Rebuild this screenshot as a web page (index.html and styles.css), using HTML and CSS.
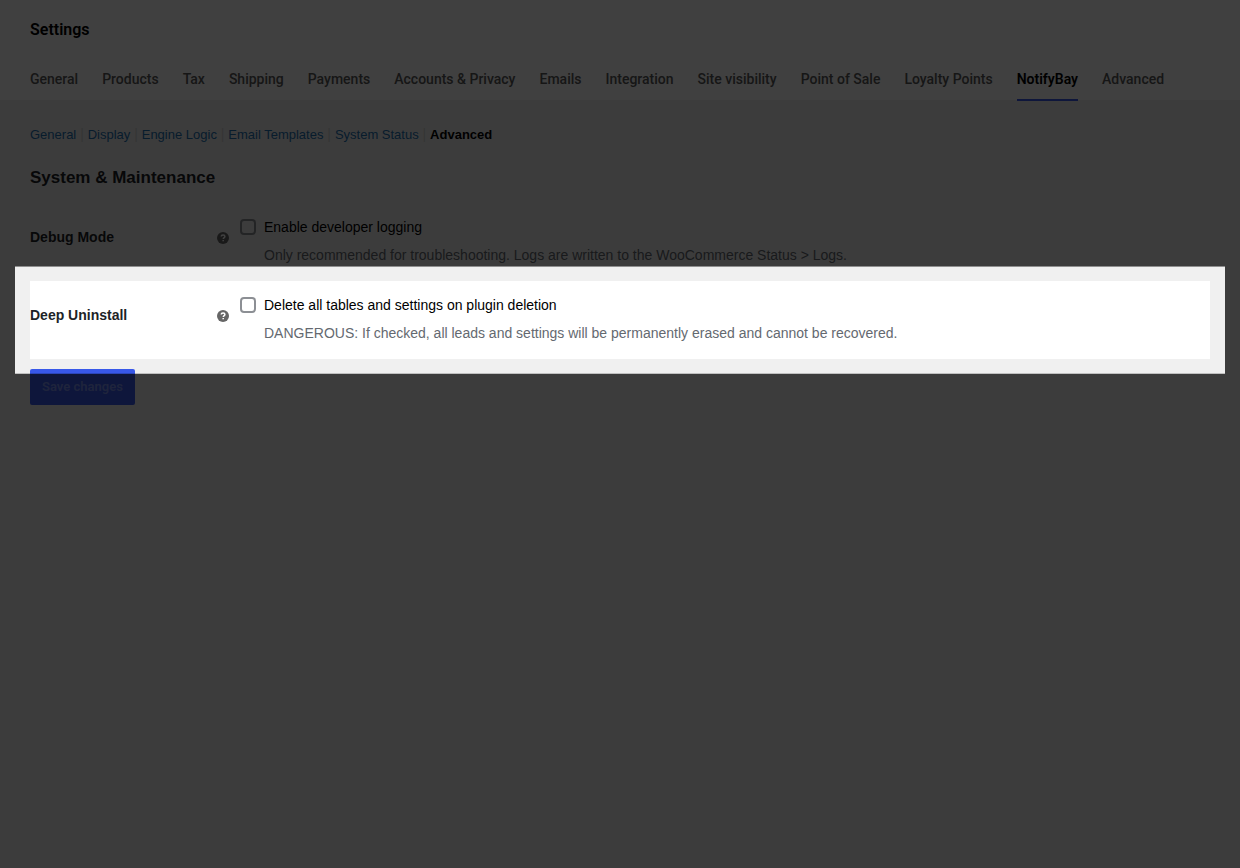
FILE: index.html
```html
<!DOCTYPE html>
<html lang="en">
  <head>
    <meta charset="UTF-8" />
    <meta name="viewport" content="width=device-width, initial-scale=1.0" />
    <title>WooCommerce Settings - NotifyBay</title>
    <link rel="stylesheet" href="styles.css">
  </head>
  <body>
    <header class="page-header">
      <h1>Settings</h1>
      <nav class="tabs">
        <a href="#">General</a>
        <a href="#">Products</a>
        <a href="#">Tax</a>
        <a href="#">Shipping</a>
        <a href="#">Payments</a>
        <a href="#">Accounts &amp; Privacy</a>
        <a href="#">Emails</a>
        <a href="#">Integration</a>
        <a href="#">Site visibility</a>
        <a href="#">Point of Sale</a>
        <a href="#">Loyalty Points</a>
        <a href="#" class="active">NotifyBay</a>
        <a href="#">Advanced</a>
      </nav>
    </header>

    <main class="content">
      <ul class="sections">
        <li><a href="#">General</a> |</li>
        <li><a href="#">Display</a> |</li>
        <li><a href="#">Engine Logic</a> |</li>
        <li><a href="#">Email Templates</a> |</li>
        <li><a href="#">System Status</a> |</li>
        <li><a href="#" class="current">Advanced</a></li>
      </ul>

      <h2>System &amp; Maintenance</h2>

      <form>
        <div class="setting">
          <div class="setting-title">
            <span>Debug Mode</span>
            <svg class="help" viewBox="0 0 12 12" aria-hidden="true">
              <circle cx="6" cy="6" r="6" />
              <path d="M4.3 4.6C4.3 3.5 5 2.9 6.1 2.9s1.8.6 1.8 1.5c0 1.2-1.6 1.2-1.6 2.5M6.2 7.9v1.4" />
            </svg>
          </div>
          <div class="setting-field">
            <label for="debug-mode">
              <input type="checkbox" id="debug-mode" />
              Enable developer logging
            </label>
            <p class="description">
              Only recommended for troubleshooting. Logs are written to the
              WooCommerce Status &gt; Logs.
            </p>
          </div>
        </div>

        <div class="setting highlighted">
          <div class="setting-title">
            <span>Deep Uninstall</span>
            <svg class="help" viewBox="0 0 12 12" aria-hidden="true">
              <circle cx="6" cy="6" r="6" />
              <path d="M4.3 4.6C4.3 3.5 5 2.9 6.1 2.9s1.8.6 1.8 1.5c0 1.2-1.6 1.2-1.6 2.5M6.2 7.9v1.4" />
            </svg>
          </div>
          <div class="setting-field">
            <label for="deep-uninstall">
              <input type="checkbox" id="deep-uninstall" />
              Delete all tables and settings on plugin deletion
            </label>
            <p class="description">
              DANGEROUS: If checked, all leads and settings will be permanently
              erased and cannot be recovered.
            </p>
          </div>
        </div>

        <button type="submit" class="save" disabled>Save changes</button>
      </form>
    </main>
  </body>
</html>
```
FILE: styles.css
```css
* {
  box-sizing: border-box;
}
body {
  min-height: 100vh;
  margin: 0;
  font-family: "Liberation Sans", Arial, sans-serif;
  font-size: 14px;
  line-height: 20px;
  color: #000;
  background-color: #f0f0f0;
  overflow-x: hidden;
}
a {
  color: #2271b1;
  text-decoration: none;
}

/* Header and tabs */
.page-header {
  padding: 20px 30px 0;
  background-color: #fff;
  font-family: Roboto, sans-serif;
}
h1 {
  margin: 0;
  font-size: 16px;
  font-weight: 600;
  line-height: 20px;
}
.tabs {
  display: flex;
  gap: 24px;
  height: 60px;
  white-space: nowrap;
}
.tabs a {
  height: 61px;
  padding-top: 29px;
  font-weight: 500;
  color: #5a5a5a;
}
.tabs a.active {
  color: #000;
  font-weight: 600;
  border-bottom: 2px solid #3858e9;
}

/* Section links */
.content {
  padding: 24px 30px;
}
.sections {
  margin: 0;
  padding: 0;
  list-style: none;
  color: #d0d0d0;
}
.sections li {
  display: inline;
}
.sections a {
  font-size: 13px;
}
.sections .current {
  color: #000;
  font-weight: 600;
}
h2 {
  margin: 20px 0 12px;
  font-size: 17px;
  line-height: 26px;
  color: #1d2327;
}

/* Settings rows */
.setting {
  display: flex;
  align-items: flex-start;
  padding: 14px 0 16px;
}
.setting-title {
  display: flex;
  justify-content: space-between;
  align-items: center;
  flex: 0 0 210px;
  padding: 10px 11px 0 0;
  font-weight: 600;
  color: #1d2327;
}
.help {
  width: 12px;
  height: 12px;
  margin-top: 2px;
  fill: #666;
}
.help path {
  fill: none;
  stroke: #fff;
  stroke-width: 1.5;
}
.setting-field label {
  display: flex;
  align-items: center;
  gap: 8px;
}
.setting-field input {
  appearance: none;
  width: 16px;
  height: 16px;
  margin: 0;
  border: 2px solid #8c8f94;
  border-radius: 4px;
  background-color: transparent;
}
.description {
  margin: 8px 0 0 24px;
  color: #646970;
}

/* The ring around the row stays lit, the rest of the page is dimmed */
.highlighted {
  position: relative;
  background-color: #fff;
}
.highlighted::after {
  content: "";
  position: absolute;
  inset: -15px;
  z-index: 10;
  border-top: 1px solid rgba(0, 0, 0, 0.4);
  border-bottom: 1px solid rgba(0, 0, 0, 0.2);
  box-shadow: 0 0 0 9999px rgba(0, 0, 0, 0.75);
  pointer-events: none;
}

.save {
  display: block;
  height: 36px;
  margin-top: 10px;
  padding: 0 12px 2px;
  border: 0;
  border-radius: 2px;
  background-color: #3858e9;
  color: rgba(255, 255, 255, 0.35);
  font-family: Roboto, sans-serif;
  font-size: 13px;
  font-weight: 600;
}
```
